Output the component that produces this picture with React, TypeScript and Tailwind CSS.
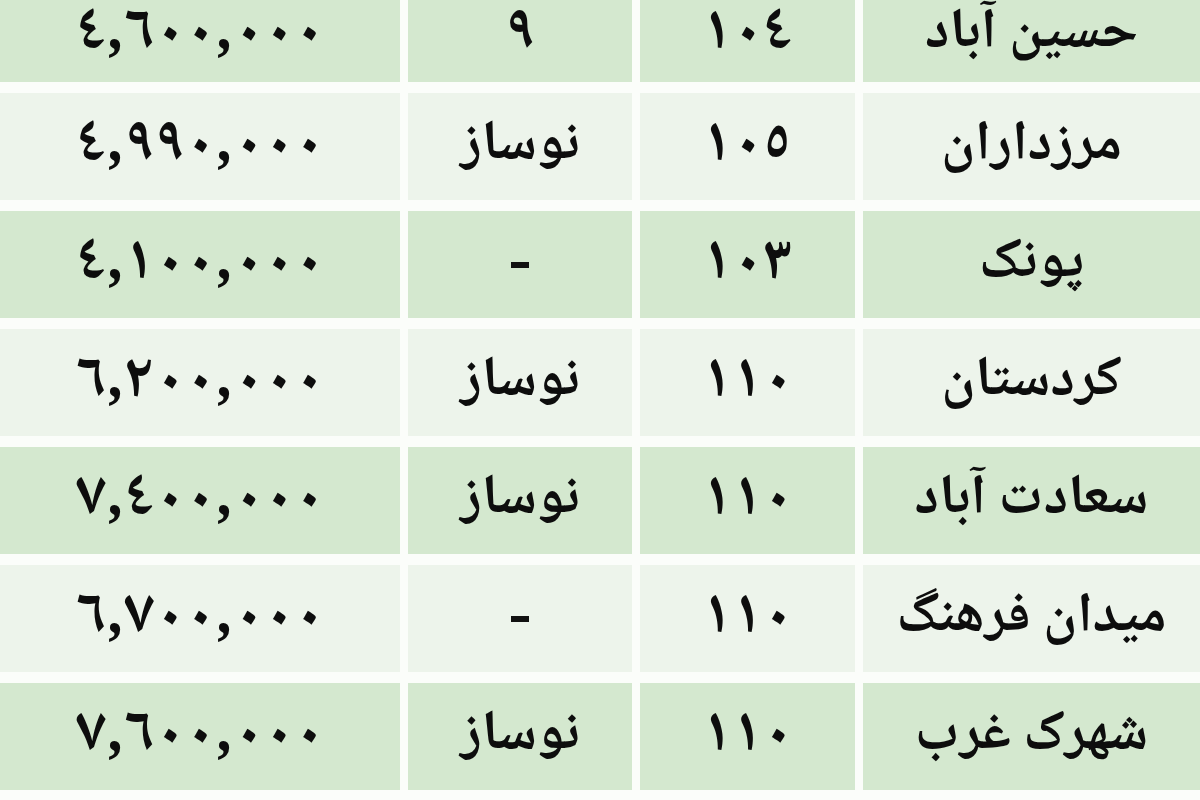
import React from "react";

type Row = { name: string; area: string; age: string; price: string; green: boolean };

const rows: Row[] = [
  { name: "حسین آباد", area: "١٠٤", age: "٩", price: "٤,٦٠٠,٠٠٠", green: true },
  { name: "مرزداران", area: "١٠٥", age: "نوساز", price: "٤,٩٩٠,٠٠٠", green: false },
  { name: "پونک", area: "١٠٣", age: "-", price: "٤,١٠٠,٠٠٠", green: true },
  { name: "کردستان", area: "١١٠", age: "نوساز", price: "٦,٢٠٠,٠٠٠", green: false },
  { name: "سعادت آباد", area: "١١٠", age: "نوساز", price: "٧,٤٠٠,٠٠٠", green: true },
  { name: "میدان فرهنگ", area: "١١٠", age: "-", price: "٦,٧٠٠,٠٠٠", green: false },
  { name: "شهرک غرب", area: "١١٠", age: "نوساز", price: "٧,٦٠٠,٠٠٠", green: true },
];

export default function App() {
  return (
    <div className="w-[1200px] h-[800px] overflow-hidden bg-[#fbfdfa]">
      <div
        dir="rtl"
        className="grid grid-cols-[337px_215px_224px_400px] gap-x-[8px] gap-y-[11px] text-[#0d0d0d] text-[56px] font-bold leading-none"
        style={{ fontFamily: '"Noto Naskh Arabic", "Noto Sans Arabic", "DejaVu Sans", sans-serif' }}
      >
        {rows.map((r, i) => {
          const bg = r.green ? "bg-[#d4e8cf]" : "bg-[#edf4eb]";
          const h = i === 0 ? "h-[82px] pb-[12px]" : "h-[107px]";
          const cell = `${bg} ${h} flex items-center justify-center`;
          const isNum = /^[٠-٩]+$/.test(r.age);
          return (
            <React.Fragment key={i}>
              <div className={cell}>{r.name}</div>
              <div className={`${cell} text-[62px] tracking-[5px]`}>{r.area}</div>
              <div className={`${cell} ${isNum ? "text-[62px]" : ""}`}>
                {r.age === "-" ? <span className="block w-[18px] h-[6px] bg-[#111]" /> : r.age}
              </div>
              <div className={`${cell} text-[62px] tracking-[3px]`} dir="ltr">
                {r.price}
              </div>
            </React.Fragment>
          );
        })}
      </div>
    </div>
  );
}
